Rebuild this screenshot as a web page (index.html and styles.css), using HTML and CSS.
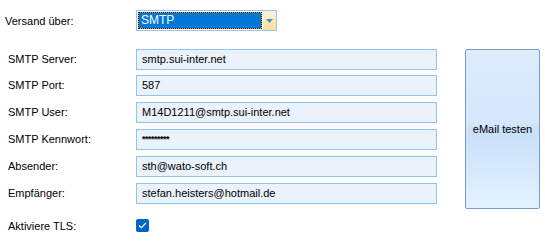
FILE: index.html
```html
<!DOCTYPE html>
<html lang="de">
<head>
    <meta charset="UTF-8">
    <title>eMail Einstellungen</title>
    <link rel="stylesheet" href="styles.css">
</head>
<body>
    <div class="settings">
        <div class="send-row">
            <label class="send-label">Versand über:</label>
            <div class="combo">
                <span class="combo-value">SMTP</span>
                <span class="combo-btn">
                    <svg width="7" height="4" viewBox="0 0 7 4"><path d="M0 0h7L3.5 4z" fill="#5a86c0"/></svg>
                </span>
            </div>
        </div>

        <div class="smtp">
            <div class="smtp-form">
                <label>SMTP Server:</label>
                <div class="field">smtp.sui-inter.net</div>

                <label>SMTP Port:</label>
                <div class="field">587</div>

                <label>SMTP User:</label>
                <div class="field">M14D1211@smtp.sui-inter.net</div>

                <label>SMTP Kennwort:</label>
                <div class="field pw">*********</div>

                <label>Absender:</label>
                <div class="field">sth@wato-soft.ch</div>

                <label>Empfänger:</label>
                <div class="field">stefan.heisters@hotmail.de</div>
            </div>
            <button class="test-btn">eMail testen</button>
        </div>

        <div class="tls-row">
            <label>Aktiviere TLS:</label>
            <span class="check">
                <svg width="9" height="7" viewBox="0 0 9 7"><path d="M1 3.5l2.3 2.2L8 1" fill="none" stroke="#fff" stroke-width="1.2"/></svg>
            </span>
        </div>
    </div>
</body>
</html>
```

FILE: styles.css
```css
body {
    margin: 0;
    font-family: "Liberation Sans", Arial, sans-serif;
    font-size: 11px;
    color: #000;
    background-color: #fff;
}
.settings {
    padding: 10px 5px 0 5px;
}
.send-row {
    display: flex;
    align-items: center;
    height: 21px;
}
.send-label {
    width: 131px;
}
.combo {
    display: flex;
    width: 139px;
    height: 19px;
    border: 1px solid #92c5f3;
    background-color: #fff;
}
.combo-value {
    flex: 1;
    margin: 1px;
    padding-left: 2px;
    line-height: 15px;
    color: #fff;
    font-size: 12px;
    border: 1px dotted #111;
    background: linear-gradient(#0078d7, #0078d7) padding-box, #e9a43c border-box;
}
.combo-btn {
    width: 13px;
    display: flex;
    align-items: center;
    justify-content: center;
    background: linear-gradient(#fdf4d6, #fbe099);
}
.smtp {
    display: flex;
    margin-top: 18px;
    padding-left: 3px;
}
.smtp-form {
    display: grid;
    grid-template-columns: 128px 301px;
    grid-template-rows: 26px 27px 27px 27px 27px 21px;
    align-items: start;
}
.smtp-form label {
    line-height: 21px;
}
.field {
    box-sizing: border-box;
    height: 21px;
    line-height: 19px;
    padding-left: 5px;
    border: 1px solid #8fc3f2;
    background-color: #eaf2fc;
}
.field.pw {
    font-size: 9px;
    font-weight: bold;
    letter-spacing: -0.5px;
}
.test-btn {
    margin-left: 28px;
    width: 75px;
    height: 160px;
    padding: 0;
    border: 1px solid #7a9bc6;
    border-radius: 2px;
    font-family: inherit;
    font-size: 11px;
    color: #000;
    background: linear-gradient(#dcecfd 0%, #d6e8fc 45%, #c9e0fa 52%, #d8ebfc 80%, #e3f2fe 100%);
}
.tls-row {
    display: flex;
    align-items: center;
    margin-top: 10px;
    padding-left: 3px;
    height: 13px;
}
.tls-row label {
    width: 128px;
}
.check {
    width: 13px;
    height: 13px;
    border-radius: 2px;
    background-color: #0065c4;
    display: flex;
    align-items: center;
    justify-content: center;
}
```
